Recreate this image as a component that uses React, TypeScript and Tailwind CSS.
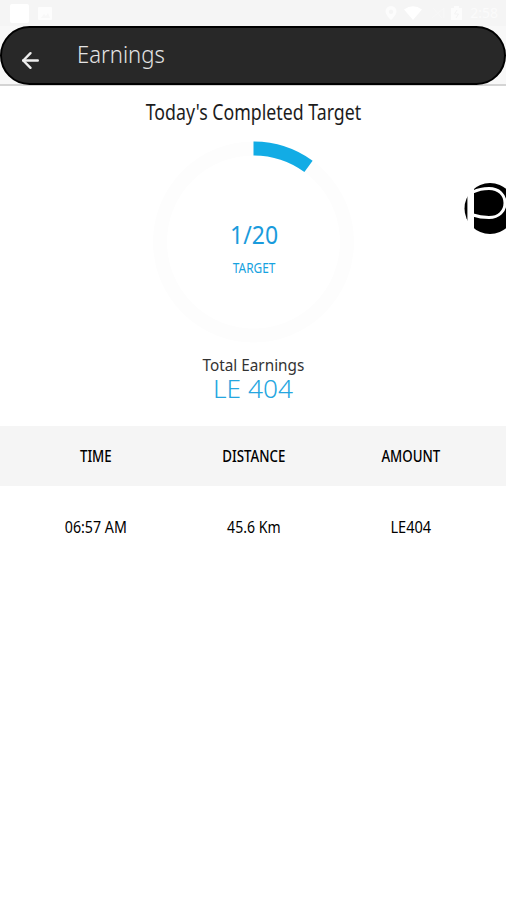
import { ArrowLeft } from 'lucide-react'

const TRIPS = [{ time: '06:57 AM', distance: '45.6 Km', amount: 'LE404' }]

const RADIUS = 93.5
const LENGTH = 2 * Math.PI * RADIUS

function StatusBar() {
  return (
    <div className="flex h-[26px] items-center justify-between bg-[#f5f5f5] pl-[10px] pr-2 text-white">
      <div className="flex items-center gap-[9px]">
        <span className="size-[19px] rounded-[2px] bg-white" />
        <svg width="14" height="13" viewBox="0 0 14 13">
          <rect width="14" height="13" rx="1" fill="#fdfdfd" />
          <path d="M3 11l3-4 2 2 2-3 2 5z" fill="#f8f8f8" />
        </svg>
      </div>
      <div className="flex items-center">
        <svg width="12" height="14" viewBox="0 0 12 14" className="mr-[7px]">
          <path d="M6 0a5.500 5.500 0 0 0-5.500 5.500C.500 9 6 14 6 14s5.500-5 5.500-8.500A5.500 5.500 0 0 0 6 0zm0 3.500a2.200 2.200 0 1 1 0 4.400 2.200 2.200 0 0 1 0-4.400z" fill="#fcfcfc" />
        </svg>
        <svg width="18" height="14" viewBox="0 0 18 14" className="mr-[9px]">
          <path d="M0 3.500Q9-3 18 3.500L9 14z" fill="#fff" />
        </svg>
        <svg width="14" height="12" viewBox="0 0 14 12" className="mr-[6px]">
          <path d="M1 11L13 1v10M2 1l9 10" fill="none" stroke="#f8f8f8" />
        </svg>
        <svg width="11" height="14" viewBox="0 0 11 14" className="mr-[8px]">
          <path d="M0 2h3V0h5v2h3v12H0z" fill="#fcfcfc" />
          <path d="M6 4L3.500 8h4L5 12" fill="none" stroke="#f4f4f4" />
        </svg>
        <span className="text-[14px] leading-none text-[#fbfbfb]">2:58</span>
      </div>
    </div>
  )
}

function TargetRing({ done, total }: { done: number; total: number }) {
  return (
    <div className="mt-[13px] grid size-[206px] place-items-center">
      <svg width="206" height="206" viewBox="0 0 206 206" className="col-start-1 row-start-1">
        <circle cx="103.500" cy="103" r={RADIUS} fill="none" stroke="#fdfdfd" strokeWidth="14" />
        <circle
          cx="103.500"
          cy="103"
          r={RADIUS}
          fill="none"
          stroke="#12ace5"
          strokeWidth="14"
          strokeDasharray={`${LENGTH * 0.1} ${LENGTH}`}
          transform="rotate(-90 103.5 103)"
        />
      </svg>
      <div className="col-start-1 row-start-1 flex flex-col items-center pt-[11px] pl-[2px] text-[#1a9bdc]">
        <span className="scale-x-[.92] text-[25px] leading-[32px]">
          {done}/{total}
        </span>
        <span className="mt-[8px] scale-x-[.85] text-[14px] leading-[20px] text-[#16a2e0]">TARGET</span>
      </div>
    </div>
  )
}

function FloatingLogo() {
  return (
    <svg width="44" height="54" viewBox="462 181 44 54" className="absolute right-0 top-[181px]">
      <circle cx="490" cy="208.500" r="25.500" fill="#000" />
      <path d="M467.400 180h6.600v55h-6.600z" fill="#fff" />
      <path
        d="M473 192Q480 188.500 489 188.500C499 188.500 505 195 505 203S499 217.500 489 217.500Q480 217.500 473 215"
        fill="none"
        stroke="#fff"
        strokeWidth="3"
      />
    </svg>
  )
}

export default function App() {
  return (
    <div className="relative h-[900px] w-[506px] overflow-hidden bg-white font-['Noto_Sans',sans-serif] text-[#1c1c1c]">
      <StatusBar />
      <header className="h-[60px] border-b-2 border-[#d4d4d4] bg-[#f8f8f8]">
        <div className="flex h-[59px] items-center rounded-full border-2 border-black bg-[#282828] pl-[16px]">
          <ArrowLeft size={25} strokeWidth={2.3} className="mt-[9px] text-[#eeeeee]" />
          <h1 className="mb-[3px] ml-[34px] origin-left scale-x-[.92] text-[24px] leading-none font-light text-[#e4e4e4]">Earnings</h1>
        </div>
      </header>

      <main>
        <section className="flex h-[340px] flex-col items-center pt-[12px]">
          <h2 className="scale-x-[.845] pl-px text-[21px] leading-[28px] whitespace-nowrap">Today's Completed Target</h2>
          <TargetRing done={1} total={20} />
          <p className="mt-[9px] scale-x-[.9] pl-[2px] text-[17px] leading-[22px] whitespace-nowrap text-[#333333]">Total Earnings</p>
          <p className="scale-x-[1.05] text-[25px] leading-[24px] font-light whitespace-nowrap text-[#25a6df]">LE 404</p>
        </section>

        <section className="text-center text-[16px]">
          <div className="grid h-[60px] grid-cols-3 items-center bg-[#f5f5f5] pr-[16px] pl-[17px] font-medium text-black">
            <span className="scale-x-[.83]">TIME</span>
            <span className="scale-x-[.83]">DISTANCE</span>
            <span className="scale-x-[.83]">AMOUNT</span>
          </div>
          {TRIPS.map((trip) => (
            <div key={trip.time} className="grid h-[82px] grid-cols-3 items-center pr-[16px] pl-[17px] text-black">
              <span className="scale-x-[.89]">{trip.time}</span>
              <span className="scale-x-[.88]">{trip.distance}</span>
              <span className="scale-x-[.91]">{trip.amount}</span>
            </div>
          ))}
        </section>
      </main>
      <FloatingLogo />
    </div>
  )
}
